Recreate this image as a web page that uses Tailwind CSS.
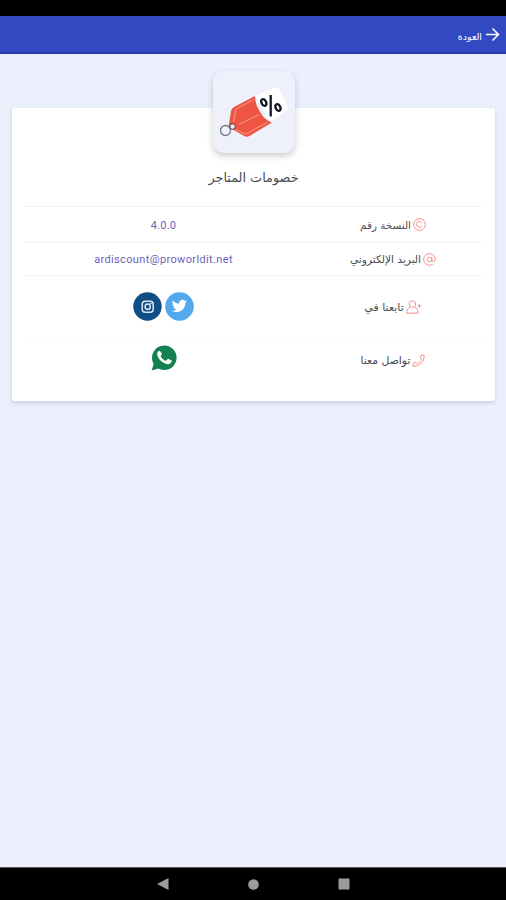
<!DOCTYPE html>
<html lang="ar" dir="rtl">
<head>
<meta charset="utf-8">
<title>خصومات المتاجر</title>
<script src="https://cdn.jsdelivr.net/npm/@tailwindcss/browser@4"></script>
</head>
<body class="w-[506px] h-[900px] overflow-hidden flex flex-col bg-[#ecf0fd] font-['DejaVu_Sans',sans-serif] text-[#4b4c52]">
<div class="h-4 bg-black shrink-0"></div>
<header class="h-[38px] shrink-0 bg-[#3349c1] border-b-2 border-[#263bab] flex items-center gap-[3px] pr-[6px] pt-1 text-white">
  <svg class="size-[15px] -mt-1" viewBox="0 0 15 15" fill="none" stroke="currentColor" stroke-width="1.5"><path d="M1 7.5h12M7.5 1.5l6 6-6 6"/></svg>
  <span class="text-[9.5px] leading-3 pt-px">العودة</span>
</header>
<main class="flex-1 pr-[11px] pt-[54px]">
  <section class="w-[483px] h-[293px] bg-white rounded-[3px] shadow-[0_2px_4px_rgba(40,50,100,0.18)] px-3 flex flex-col items-center">
    <div class="-mt-[37px] size-[82px] rounded-[11px] bg-[#eef0fb] shadow-[0_3px_6px_rgba(30,30,50,0.22)] shrink-0">
      <svg class="size-[82px]" viewBox="0 0 82 82">
        <path d="M42 25L61 16.500Q64 15.500 66 18L74.500 35Q75.500 38 72 40.500L58 51.500Z" fill="#fff"/>
        <path d="M42 25L21 36Q18.500 37.500 18 40L15.500 56 32 65.500Q34 66 36.500 65L59 51.500Q51 49 46.500 40 42 33 42 25Z" fill="#ee5542"/>
        <path d="M40.500 28.500L23 38 20.500 51M23 58.500L32 63 34 62.500 54 51.500M26 53.500L46 43.500" fill="none" stroke="#ffa08a" stroke-width="1"/>
        <circle cx="12.500" cy="59.500" r="5" fill="none" stroke="#777b85" stroke-width="1.3"/>
        <circle cx="19.500" cy="55.500" r="2.800" fill="#e5e7ed" stroke="#4f3b43" stroke-width="1"/>
        <g fill="none" stroke="#121724" stroke-width="2.3"><path d="M57.700 24V45.500"/><ellipse cx="50.800" cy="31.500" rx="2.300" ry="3.500" transform="rotate(-25 50.800 31.500)"/><ellipse cx="65" cy="36.500" rx="2.300" ry="3.500" transform="rotate(-25 65 36.500)"/></g>
      </svg>
    </div>
    <h1 class="h-[53px] shrink-0 pt-[15px] text-[12.8px] leading-5 whitespace-nowrap">خصومات المتاجر</h1>
    <div class="w-[459px] text-[10.4px] leading-4">
      <div class="h-9 border-t border-[#f3f3f5] flex items-center">
        <div class="w-[180px] flex justify-center items-center gap-[2px]">
          <svg class="size-[13px] text-[#f58b8b]" viewBox="0 0 12 12" fill="none" stroke="currentColor" stroke-width=".9"><circle cx="6" cy="6" r="5.4"/><path d="M8 4.5A2.6 2.6 0 1 0 8 7.500"/></svg>
          <span class="pt-px">النسخة رقم</span>
        </div>
        <div class="w-[279px] pt-[2px] text-center text-[#6c62bd] font-['Roboto',sans-serif] text-[11px] tracking-[.2px]">4.0.0</div>
      </div>
      <div class="h-[33px] border-t border-[#f3f3f5] flex items-center">
        <div class="w-[180px] flex justify-center items-center gap-[2px] text-[10.6px]">
          <svg class="size-[13px] text-[#f58b8b]" viewBox="0 0 12 12" fill="none" stroke="currentColor" stroke-width=".9"><circle cx="6" cy="6" r="2.2"/><path d="M8.2 3.8v3.1c0 1.4 3.2 1.4 3.2-1A5.4 5.4 0 1 0 9 10.4"/></svg>
          <span>البريد الإلكتروني</span>
        </div>
        <div class="w-[279px] pt-[2px] text-center text-[#6c62bd] font-['Roboto',sans-serif] text-[11px] tracking-[.36px]" dir="ltr">ardiscount@proworldit.net</div>
      </div>
      <div class="h-[63px] border-t border-[#f3f3f5] flex items-center">
        <div class="w-[180px] flex justify-center items-center gap-[2px] text-[11px]">
          <svg class="w-[16px] h-[14px] text-[#f58b8b]" viewBox="0 0 15 13" fill="none" stroke="currentColor" stroke-width=".9"><circle cx="6" cy="3.7" r="3.1"/><path d="M4 6.7C2 7.2.7 9 .7 12.3h10.6C11.3 9 10 7.2 8 6.7M12.5 3.500v4M10.5 5.500h4"/></svg>
          <span class="pt-px">تابعنا في</span>
        </div>
        <div class="w-[279px] flex justify-center gap-[3px] -mt-[2px]">
          <svg class="size-[29px]" viewBox="0 0 29 29"><circle cx="14.5" cy="14.5" r="14.3" fill="#53a9ed"/><path transform="translate(6.8 6.4) scale(.63)" fill="#fff" d="M23.95 4.57a10 10 0 0 1-2.82.77 4.96 4.96 0 0 0 2.16-2.72c-.95.56-2 .96-3.13 1.18a4.92 4.92 0 0 0-8.38 4.48C7.69 8.1 4.07 6.13 1.64 3.16a4.92 4.92 0 0 0 1.52 6.57 4.9 4.9 0 0 1-2.23-.61v.06a4.92 4.92 0 0 0 3.95 4.83 5 5 0 0 1-2.21.08 4.94 4.94 0 0 0 4.6 3.42A9.87 9.87 0 0 1 0 19.54a14 14 0 0 0 7.55 2.21c9.05 0 14-7.5 14-13.98v-.64a9.94 9.94 0 0 0 2.4-2.56z"/></svg>
          <svg class="size-[29px]" viewBox="0 0 29 29"><circle cx="14.5" cy="14.5" r="14.2" fill="#104f85"/><g fill="none" stroke="#dbe5ef" stroke-width="1.5"><rect x="9.2" y="9.2" width="11" height="11" rx="3"/><circle cx="14.7" cy="14.7" r="2.6"/></g><circle cx="17.8" cy="11.6" r=".8" fill="#fff"/></svg>
        </div>
      </div>
      <div class="h-[52px] border-t border-[#fafafb] flex items-center">
        <div class="w-[180px] flex justify-center items-center gap-[2px] -mt-[9px] text-[10.8px]">
          <svg class="size-[13px] text-[#f58b8b]" viewBox="0 0 12 12" fill="none" stroke="currentColor" stroke-width=".9" stroke-linejoin="round"><path d="M8.8.7l2.5.6C11.3 7.2 7.2 11.3 1.3 11.3L.7 8.8 3.4 7.6 4.6 9C6.6 8 8 6.6 9 4.6L7.6 3.4Z"/></svg>
          <span class="pt-px">تواصل معنا</span>
        </div>
        <div class="w-[279px] flex justify-center -mt-[14px] pl-px">
          <svg class="size-[26px]" viewBox="0 0 26 26"><path d="M13.3.5A12.3 12.3 0 0 0 2.7 19L.6 25.4l6.8-1.8A12.3 12.3 0 1 0 13.3.5Z" fill="#14804f"/><path d="M9.6 6.7c-.5-1-1-.9-1.7-.8C6.8 6.4 6 7.7 6.2 9.2c.3 4.8 6.8 10.3 11.2 10 1.8-.2 3.2-1.4 3.3-3.1 0-.5-.1-.7-.5-.9l-2.7-1.3c-.4-.2-.7-.1-1 .3l-1.2 1.4c-.3.3-.6.3-1 .1-2-.9-3.5-2.3-4.5-4.1-.2-.4-.1-.6.1-.9l.9-1.1c.2-.3.2-.6.1-.9Z" fill="#fff"/></svg>
        </div>
      </div>
    </div>
  </section>
</main>
<nav class="h-[33px] shrink-0 bg-black border-t border-[#55565c] flex justify-center items-center gap-[79px] text-[#9b9b9b]" dir="ltr">
  <svg class="size-3" viewBox="0 0 12 12" fill="currentColor"><path d="M0 6L11.5 0v12Z"/></svg>
  <svg class="size-[11px]" viewBox="0 0 12 12" fill="currentColor"><circle cx="6" cy="6" r="5.8"/></svg>
  <svg class="size-3" viewBox="0 0 12 12" fill="currentColor"><path d="M.5.5h11v11H.5z"/></svg>
</nav>
</body>
</html>
